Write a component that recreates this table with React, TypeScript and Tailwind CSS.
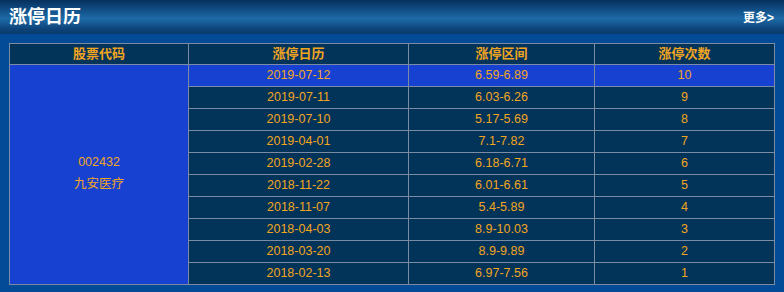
const rows = [
  { date: '2019-07-12', range: '6.59-6.89', count: 10 },
  { date: '2019-07-11', range: '6.03-6.26', count: 9 },
  { date: '2019-07-10', range: '5.17-5.69', count: 8 },
  { date: '2019-04-01', range: '7.1-7.82', count: 7 },
  { date: '2019-02-28', range: '6.18-6.71', count: 6 },
  { date: '2018-11-22', range: '6.01-6.61', count: 5 },
  { date: '2018-11-07', range: '5.4-5.89', count: 4 },
  { date: '2018-04-03', range: '8.9-10.03', count: 3 },
  { date: '2018-03-20', range: '8.9-9.89', count: 2 },
  { date: '2018-02-13', range: '6.97-7.56', count: 1 },
]

export default function App() {
  return (
    <div className="w-[784px] h-[292px] bg-[#034b97] font-['Liberation_Sans','Noto_Sans_CJK_SC',sans-serif]">
      {/* Title bar */}
      <div className="h-[34px] flex items-center justify-between px-[9px] bg-[linear-gradient(to_bottom,#062f5c_0%,#14558f_35%,#1d6aa6_55%,#0d4479_85%,#083a6c_100%)]">
        <h2 className="text-white text-[18px] font-bold leading-none">涨停日历</h2>
        <a href="#" className="text-white text-[12px] font-bold pt-[2px] mr-[1px]">更多&gt;</a>
      </div>

      {/* Table */}
      <div className="pt-[9px] px-[9px]">
        <div className="w-[766px] bg-[#7b8ba3] p-px grid grid-cols-[178px_219px_185px_179px] grid-rows-[20px_repeat(10,21px)] gap-px text-[12.5px] text-[#f2a521] text-center">
          <div className="bg-[#023459] flex items-center justify-center font-bold text-[13px]">股票代码</div>
          <div className="bg-[#023459] flex items-center justify-center font-bold text-[13px]">涨停日历</div>
          <div className="bg-[#023459] flex items-center justify-center font-bold text-[13px]">涨停区间</div>
          <div className="bg-[#023459] flex items-center justify-center font-bold text-[13px]">涨停次数</div>

          <div className="row-span-10 bg-[#1741d1] flex flex-col items-center justify-center leading-[22px] pb-[3px]">
            <span>002432</span>
            <span>九安医疗</span>
          </div>

          {rows.map((r, i) => {
            const bg = i === 0 ? 'bg-[#1741d1]' : 'bg-[#023459]'
            return [
              <div key={r.date + 'd'} className={`${bg} flex items-center justify-center`}>{r.date}</div>,
              <div key={r.date + 'r'} className={`${bg} flex items-center justify-center`}>{r.range}</div>,
              <div key={r.date + 'c'} className={`${bg} flex items-center justify-center`}>{r.count}</div>,
            ]
          })}
        </div>
      </div>
    </div>
  )
}
